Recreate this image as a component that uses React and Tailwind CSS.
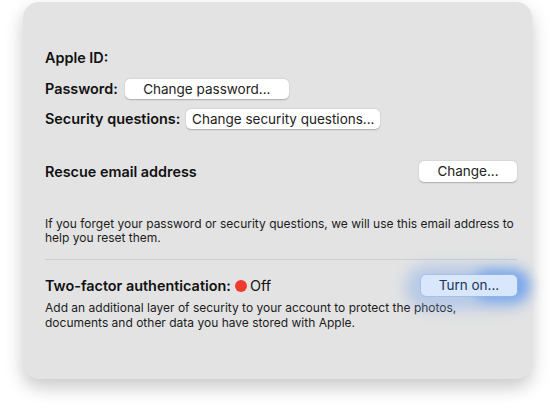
export default function App() {
  const font = { fontFamily: 'Inter, "Noto Sans", sans-serif' };
  const btn =
    "h-[20px] rounded-[5px] bg-white text-[13.5px] text-[#222] leading-[20px] text-center shadow-[0_0.5px_1.5px_rgba(0,0,0,0.25)]";
  return (
    <div className="w-[560px] h-[404px] bg-white pl-[23px] pt-[2px]" style={font}>
      <div className="w-[509px] h-[377px] rounded-[16px] bg-[#e3e3e3] shadow-[0_8px_18px_rgba(0,0,0,0.22)] pl-[22px] pr-[15px] pt-[46px] text-[#111]">
        <div className="text-[14.4px] font-semibold leading-[20px]">Apple ID:</div>
        <div className="flex items-center mt-[11px] h-[20px]">
          <span className="text-[14.4px] font-semibold">Password:</span>
          <div className={btn + " w-[164px] ml-[7px]"}>Change password...</div>
        </div>
        <div className="flex items-center mt-[10px] h-[20px]">
          <span className="text-[14.4px] font-semibold">Security questions:</span>
          <div className={btn + " w-[194px] ml-[6px]"}>Change security questions...</div>
        </div>
        <div className="flex items-center justify-between mt-[32px] h-[21px]">
          <span className="text-[14.4px] font-semibold">Rescue email address</span>
          <div className={btn + " w-[98px] h-[21px]"}>Change...</div>
        </div>
        <p className="mt-[35px] text-[12px] leading-[14px] text-[#1c1c1c] whitespace-nowrap">
          If you forget your password or security questions, we will use this email address to
          <br />
          help you reset them.
        </p>
        <div className="mt-[14px] h-px bg-[#cfcfcf]" />
        <div className="flex items-center justify-between mt-[15px] h-[21px]">
          <div className="flex items-center text-[14.4px]">
            <span className="font-semibold">Two-factor authentication:</span>
            <span className="ml-[4px] w-[12px] h-[12px] rounded-full bg-[#ef3b2d]" />
            <span className="ml-[3px]">Off</span>
          </div>
          <div className="relative w-[96px] h-[21px]">
            <div className="absolute -left-[16px] -right-[14px] -top-[10px] -bottom-[14px] rounded-[22px] bg-[rgba(120,165,235,0.4)] blur-[7px]" />
            <div className="absolute -right-[12px] -top-[5px] w-[56px] h-[31px] rounded-full bg-[rgba(80,145,240,0.6)] blur-[6px]" />
            <div className="relative w-full h-full rounded-[5px] bg-[#d8e7fc] text-[13.5px] leading-[21px] text-center text-[#1b3557] shadow-[0_0_0_1px_rgba(150,185,235,0.6)]">
              Turn on...
            </div>
          </div>
        </div>
        <p className="mt-[4px] text-[12px] leading-[15px] text-[#1c1c1c] whitespace-nowrap">
          Add an additional layer of security to your account to protect the photos,
          <br />
          documents and other data you have stored with Apple.
        </p>
      </div>
    </div>
  );
}
